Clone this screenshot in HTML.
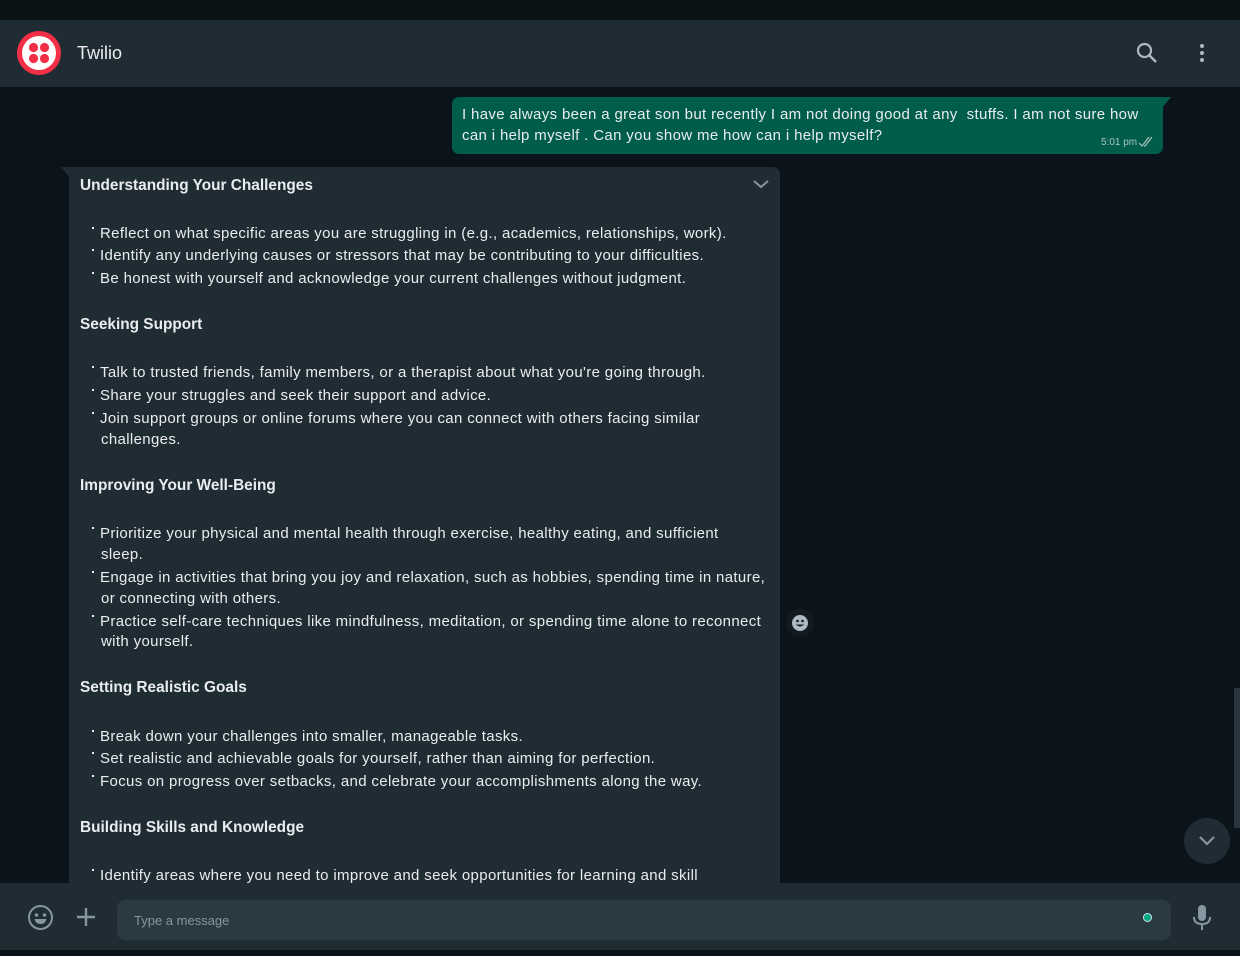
<!DOCTYPE html>
<html><head><meta charset="utf-8"><style>
*{margin:0;padding:0;box-sizing:border-box}
body{width:1240px;height:956px;overflow:hidden;background:#0b141a;font-family:"Liberation Sans",sans-serif;color:#e9edef;position:relative}
.t{position:absolute;white-space:nowrap;font-size:15px;letter-spacing:0.35px;line-height:20px;color:#e9edef;margin-top:2px}
.h{position:absolute;white-space:nowrap;font-size:15.4px;font-weight:bold;line-height:20px;color:#e9edef;margin-top:2px}
.d{position:absolute;width:2px;height:2px;background:#e9edef;margin-top:1px}
</style></head><body>
<div style="position:absolute;left:0;top:0;width:1240px;height:20px;background:#0c1317"></div>
<div style="position:absolute;left:0;top:20px;width:1240px;height:67px;background:#202c33"></div>
<svg style="position:absolute;left:17px;top:31px" width="44" height="44" viewBox="0 0 44 44"><circle cx="22" cy="22" r="22" fill="#f22f46"/><circle cx="22" cy="22" r="17" fill="#fff"/><circle cx="16.5" cy="16.5" r="4.6" fill="#f22f46"/><circle cx="27.5" cy="16.5" r="4.6" fill="#f22f46"/><circle cx="16.5" cy="27.5" r="4.6" fill="#f22f46"/><circle cx="27.5" cy="27.5" r="4.6" fill="#f22f46"/></svg>
<div style="position:absolute;left:77px;top:43px;font-size:18px;color:#e9edef">Twilio</div>
<svg style="position:absolute;left:1136px;top:42px" width="22" height="22" viewBox="0 0 22 22"><circle cx="8.5" cy="8.5" r="6.5" fill="none" stroke="#aebac1" stroke-width="2.2"/><path d="M13 13l7 7" stroke="#aebac1" stroke-width="2.4"/></svg>
<svg style="position:absolute;left:1198px;top:43px" width="8" height="20"><circle cx="4" cy="3" r="2" fill="#aebac1"/><circle cx="4" cy="10" r="2" fill="#aebac1"/><circle cx="4" cy="17" r="2" fill="#aebac1"/></svg>

<div style="position:absolute;left:452px;top:97px;width:711px;height:57px;background:#005c4b;border-radius:7px 0 7px 7px"></div>
<svg style="position:absolute;left:1162px;top:97px" width="10" height="12"><path d="M0 0H9L0 11Z" fill="#005c4b"/></svg>
<div class="t" style="left:462px;top:103px">I have always been a great son but recently I am not doing good at any&nbsp; stuffs. I am not sure how</div>
<div class="t" style="left:462px;top:124px">can i help myself . Can you show me how can i help myself?</div>
<div style="position:absolute;left:1101px;top:137px;font-size:10px;color:#a8c4bd">5:01 pm</div>
<svg style="position:absolute;left:1138px;top:136px" width="18" height="12"><path d="M1 7l3 3 7-9M6 10l1 0 7-9" stroke="#a8c4bd" stroke-width="1.2" fill="none"/></svg>

<div style="position:absolute;left:69px;top:167px;width:711px;height:716px;background:#202c33;border-radius:0 7px 0 0"></div>
<svg style="position:absolute;left:61px;top:167px" width="9" height="12"><path d="M0 0H9V11Z" fill="#202c33"/></svg>
<svg style="position:absolute;left:752px;top:178px" width="18" height="12"><path d="M2 3l7 6 7-6" stroke="#8696a0" stroke-width="2" fill="none"/></svg>

<div class="h" style="left:80px;top:174px">Understanding Your Challenges</div>
<div class="d" style="left:92px;top:226px"></div><div class="t" style="left:100px;top:222px">Reflect on what specific areas you are struggling in (e.g., academics, relationships, work).</div>
<div class="d" style="left:92px;top:248px"></div><div class="t" style="left:100px;top:244px">Identify any underlying causes or stressors that may be contributing to your difficulties.</div>
<div class="d" style="left:92px;top:271px"></div><div class="t" style="left:100px;top:267px">Be honest with yourself and acknowledge your current challenges without judgment.</div>

<div class="h" style="left:80px;top:313px">Seeking Support</div>
<div class="d" style="left:92px;top:365px"></div><div class="t" style="left:100px;top:361px">Talk to trusted friends, family members, or a therapist about what you're going through.</div>
<div class="d" style="left:92px;top:388px"></div><div class="t" style="left:100px;top:384px">Share your struggles and seek their support and advice.</div>
<div class="d" style="left:92px;top:411px"></div><div class="t" style="left:100px;top:407px">Join support groups or online forums where you can connect with others facing similar</div>
<div class="t" style="left:101px;top:428px">challenges.</div>

<div class="h" style="left:80px;top:474px">Improving Your Well-Being</div>
<div class="d" style="left:92px;top:526px"></div><div class="t" style="left:100px;top:522px">Prioritize your physical and mental health through exercise, healthy eating, and sufficient</div>
<div class="t" style="left:101px;top:543px">sleep.</div>
<div class="d" style="left:92px;top:570px"></div><div class="t" style="left:100px;top:566px">Engage in activities that bring you joy and relaxation, such as hobbies, spending time in nature,</div>
<div class="t" style="left:101px;top:587px">or connecting with others.</div>
<div class="d" style="left:92px;top:614px"></div><div class="t" style="left:100px;top:610px">Practice self-care techniques like mindfulness, meditation, or spending time alone to reconnect</div>
<div class="t" style="left:101px;top:630px">with yourself.</div>

<div class="h" style="left:80px;top:676px">Setting Realistic Goals</div>
<div class="d" style="left:92px;top:729px"></div><div class="t" style="left:100px;top:725px">Break down your challenges into smaller, manageable tasks.</div>
<div class="d" style="left:92px;top:751px"></div><div class="t" style="left:100px;top:747px">Set realistic and achievable goals for yourself, rather than aiming for perfection.</div>
<div class="d" style="left:92px;top:774px"></div><div class="t" style="left:100px;top:770px">Focus on progress over setbacks, and celebrate your accomplishments along the way.</div>

<div class="h" style="left:80px;top:816px">Building Skills and Knowledge</div>
<div class="d" style="left:92px;top:868px"></div><div class="t" style="left:100px;top:864px">Identify areas where you need to improve and seek opportunities for learning and skill</div>

<div style="position:absolute;left:786px;top:609px;width:28px;height:28px;border-radius:50%;background:#111b21"></div>
<svg style="position:absolute;left:791px;top:614px" width="18" height="18"><circle cx="9" cy="9" r="8" fill="#aebac1"/><circle cx="6.5" cy="7" r="1.3" fill="#111b21"/><circle cx="11.5" cy="7" r="1.3" fill="#111b21"/><path d="M5 10.5q4 4 8 0z" fill="#111b21"/></svg>

<div style="position:absolute;left:1184px;top:818px;width:46px;height:46px;border-radius:50%;background:#202c33"></div>
<svg style="position:absolute;left:1198px;top:835px" width="18" height="12"><path d="M2 2l7 7 7-7" stroke="#8696a0" stroke-width="2.2" fill="none"/></svg>
<div style="position:absolute;left:1234px;top:688px;width:6px;height:140px;background:#2a363d"></div>

<div style="position:absolute;left:0;top:883px;width:1240px;height:67px;background:#202c33"></div>
<div style="position:absolute;left:0;top:950px;width:1240px;height:6px;background:#0c1317"></div>
<svg style="position:absolute;left:27px;top:904px" width="27" height="27" viewBox="0 0 27 27"><circle cx="13.5" cy="13.5" r="11.5" fill="none" stroke="#8696a0" stroke-width="2"/><circle cx="9.5" cy="11" r="1.8" fill="#8696a0"/><circle cx="17.5" cy="11" r="1.8" fill="#8696a0"/><path d="M7.5 15h12q-1 5-6 5t-6-5z" fill="#8696a0"/></svg>
<svg style="position:absolute;left:76px;top:907px" width="20" height="20"><path d="M10 1v18M1 10h18" stroke="#8696a0" stroke-width="2.4"/></svg>
<div style="position:absolute;left:117px;top:900px;width:1054px;height:40px;background:#2a3942;border-radius:8px"></div>
<div style="position:absolute;left:134px;top:913px;font-size:13px;color:#8696a0">Type a message</div>
<div style="position:absolute;left:1143px;top:913px;width:9px;height:9px;border-radius:50%;background:#00a884;border:1.5px solid #d0e8e4"></div>
<svg style="position:absolute;left:1192px;top:905px" width="20" height="26" viewBox="0 0 20 26"><rect x="6" y="0" width="8" height="16" rx="4" fill="#8696a0"/><path d="M2 12q0 7 8 7t8-7M10 19v6" stroke="#8696a0" stroke-width="2" fill="none"/></svg>
</body></html>
